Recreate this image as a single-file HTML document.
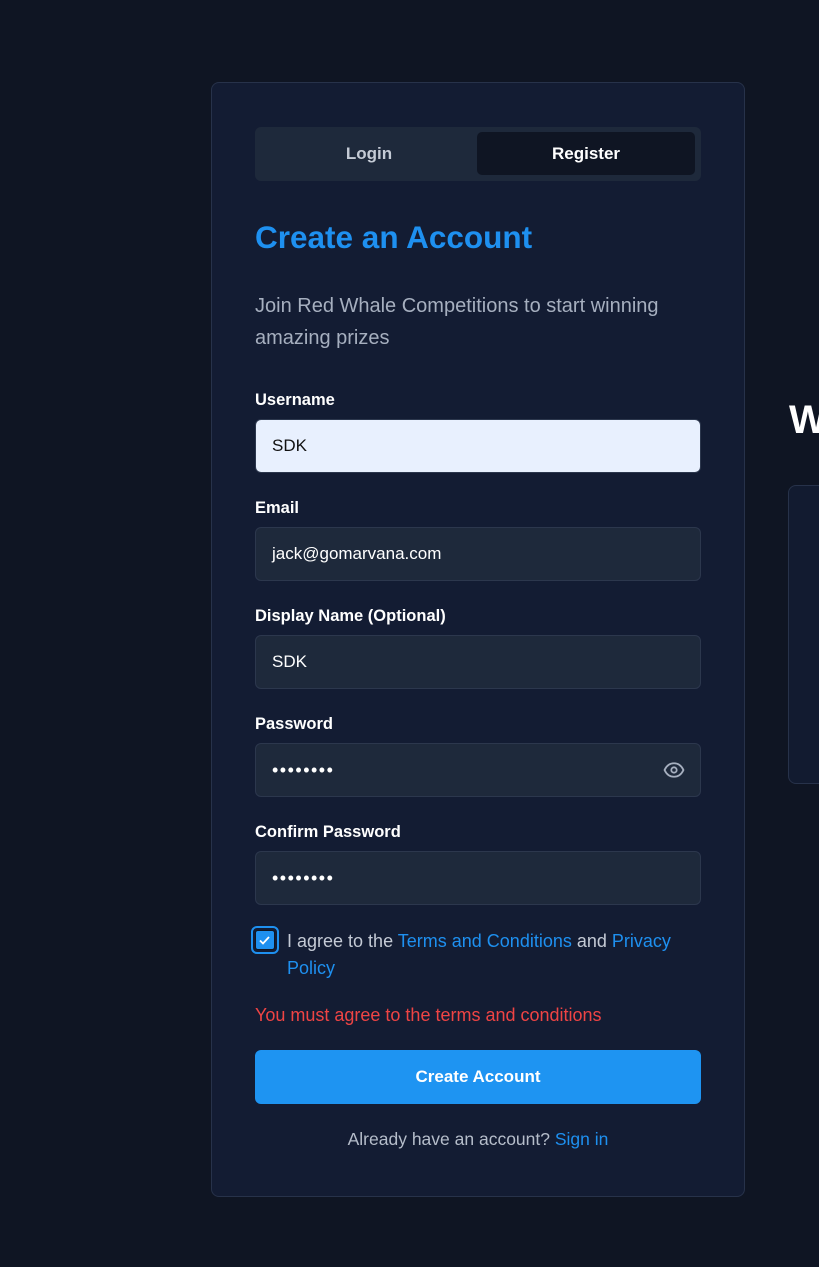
<!DOCTYPE html>
<html><head><meta charset="utf-8">
<style>
*{box-sizing:border-box;margin:0;padding:0}
body{width:819px;height:1267px;background:#0f1523;font-family:"Liberation Sans",sans-serif;position:relative;overflow:hidden}
.card{position:absolute;left:211px;top:82px;width:534px;height:1115px;background:#131c33;border:1px solid #27324a;border-radius:8px}
.tabs{position:absolute;left:43px;top:44px;width:446px;height:54px;background:#1e293b;border-radius:6px}
.tab{position:absolute;top:5px;height:43px;width:218px;line-height:43px;text-align:center;font-size:17px;font-weight:bold}
.t1{left:5px;color:#c4cad5}
.t2{left:222px;background:#0f1523;color:#fff;border-radius:5px}
.abs{position:absolute;left:43px}
h1{position:absolute;left:43px;top:136px;font-size:31.5px;color:#1e90f0;font-weight:bold}
.sub{top:207px;font-size:20px;line-height:32px;color:#a6afbf;width:450px}
.lbl{font-size:16.5px;font-weight:bold;color:#fff}
.inp{position:absolute;left:43px;width:446px;height:54px;background:#1e293b;border:1px solid #2c374d;border-radius:6px;color:#fff;font-size:17px;line-height:52px;padding-left:16px}
.dots{font-size:18px;letter-spacing:1.5px}
</style></head><body>
<div style="position:absolute;left:789px;top:398px;font-size:40px;font-weight:bold;color:#fff">W</div>
<div style="position:absolute;left:788px;top:485px;width:60px;height:299px;background:#121b30;border:1px solid #27324a;border-radius:8px"></div>
<div class="card">
<div class="tabs"><div class="tab t1">Login</div><div class="tab t2">Register</div></div>
<h1>Create an Account</h1>
<div class="abs sub">Join Red Whale Competitions to start winning amazing prizes</div>
<div class="abs lbl" style="top:308px">Username</div>
<div class="inp" style="top:336px;background:#e8f0fe;color:#111">SDK</div>
<div class="abs lbl" style="top:416px">Email</div>
<div class="inp" style="top:444px">jack@gomarvana.com</div>
<div class="abs lbl" style="top:524px">Display Name (Optional)</div>
<div class="inp" style="top:552px">SDK</div>
<div class="abs lbl" style="top:632px">Password</div>
<div class="inp dots" style="top:660px">••••••••
<svg style="position:absolute;right:15px;top:17px" width="22" height="18" viewBox="0 0 24 20" fill="none" stroke="#a6afbf" stroke-width="2"><path d="M1.5 10C4 4.5 8 2.5 12 2.5S20 4.5 22.5 10C20 15.5 16 17.5 12 17.5S4 15.5 1.5 10Z"/><circle cx="12" cy="10" r="3"/></svg></div>
<div class="abs lbl" style="top:740px">Confirm Password</div>
<div class="inp dots" style="top:768px">••••••••</div>
<div style="position:absolute;left:39px;top:843px;width:28px;height:28px;border:2px solid #1e90f0;border-radius:6px;padding:2px"><div style="width:20px;height:20px;background:#1e90f0;border-radius:3px;border:1px solid #0f1523"><svg width="18" height="18" viewBox="0 0 18 18"><path d="M4 9.5l3 3 6-6.5" stroke="#fff" stroke-width="1.8" fill="none"/></svg></div></div>
<div style="position:absolute;left:75px;top:845px;width:420px;font-size:18px;line-height:27px;color:#c4cad5">I agree to the <span style="color:#1e90f0">Terms and Conditions</span> and <span style="color:#1e90f0">Privacy Policy</span></div>
<div class="abs" style="top:922px;font-size:18px;color:#ef4444">You must agree to the terms and conditions</div>
<div style="position:absolute;left:43px;top:967px;width:446px;height:54px;background:#1e94f2;border-radius:6px;color:#fff;font-weight:bold;font-size:17px;text-align:center;line-height:54px">Create Account</div>
<div style="position:absolute;left:43px;width:446px;top:1046px;text-align:center;font-size:17.5px;color:#b5bdca">Already have an account? <span style="color:#1e90f0">Sign in</span></div>
</div>
</body></html>
